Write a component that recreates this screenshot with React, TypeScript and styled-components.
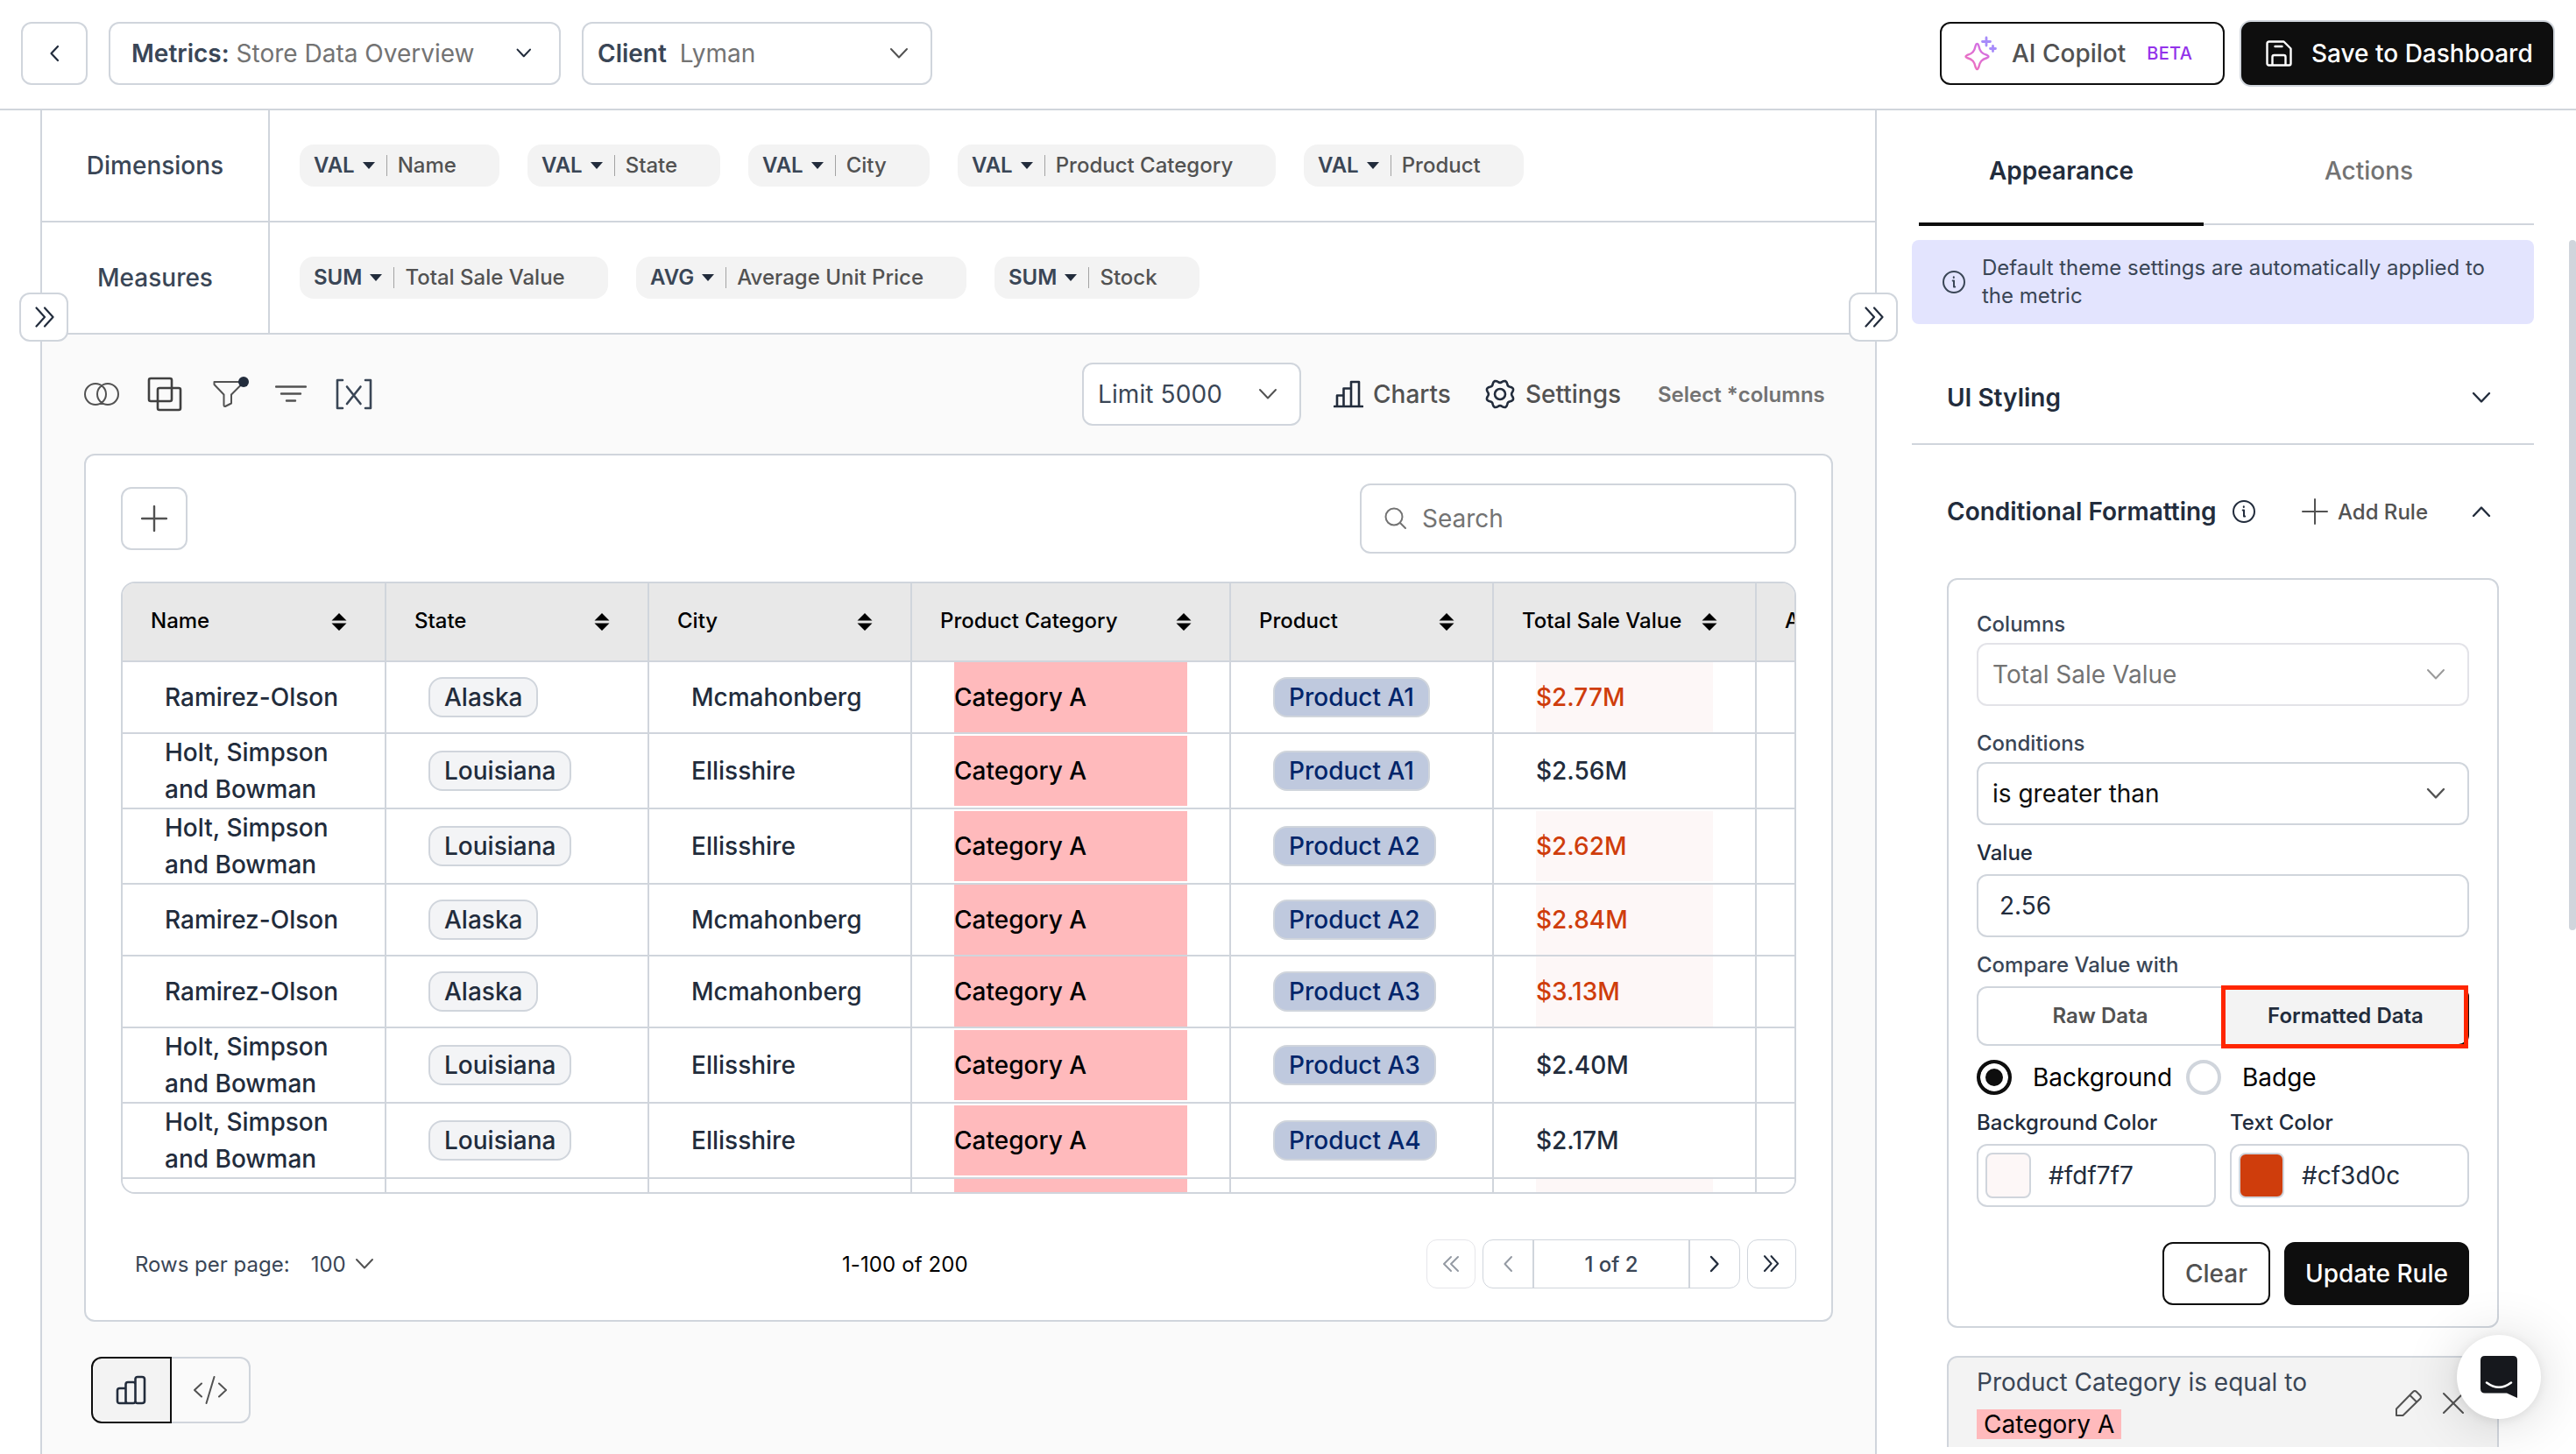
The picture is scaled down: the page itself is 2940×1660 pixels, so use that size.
import { useState } from 'react';
import styled, { createGlobalStyle, css } from 'styled-components';

const line = '#d0d5dc';
const ink = '#222c3c';
const slate = '#3a4656';
const grey = '#737373';
const black = '#0e0e0e';

const GlobalStyle = createGlobalStyle`
  * {
    box-sizing: border-box;
  }

  body {
    margin: 0;
    background: #ffffff;
    font-family: Inter, 'Liberation Sans', sans-serif;
    font-size: 28px;
    color: ${ink};
  }

  button,
  input {
    font: inherit;
    color: inherit;
    margin: 0;
    padding: 0;
  }

  svg {
    display: block;
    flex: none;
  }
`;

/* ---------- icons ---------- */

type IconName =
  | 'left'
  | 'right'
  | 'down'
  | 'up'
  | 'doubleLeft'
  | 'doubleRight'
  | 'plus'
  | 'search'
  | 'info'
  | 'save'
  | 'venn'
  | 'copy'
  | 'funnel'
  | 'lines'
  | 'variable'
  | 'chart'
  | 'gear'
  | 'bars'
  | 'code'
  | 'pencil'
  | 'close';

// eight soft lobes around a 36px box
const gear = () => {
  const points: string[] = [];
  for (let i = 0; i < 96; i += 1) {
    const angle = (i / 96) * Math.PI * 2;
    const radius = 14.6 - 1.5 * Math.cos(8 * angle);
    points.push(`${(18 + radius * Math.cos(angle)).toFixed(2)} ${(18 + radius * Math.sin(angle)).toFixed(2)}`);
  }
  return `M${points.join('L')}Z`;
};

const icons: Record<IconName, { w: number; h: number; d: string }> = {
  left: { w: 12, h: 20, d: 'M10 2L2.500 10L10 18' },
  right: { w: 12, h: 20, d: 'M2 2L9.500 10L2 18' },
  down: { w: 22, h: 14, d: 'M2 2L11 11.500L20 2' },
  up: { w: 22, h: 14, d: 'M2 12L11 2.500L20 12' },
  doubleLeft: { w: 20, h: 20, d: 'M10 2L2 10L10 18M18 2L10 10L18 18' },
  doubleRight: { w: 24, h: 24, d: 'M2.500 1.500L12 12L2.500 22.500M12 1.500L21.500 12L12 22.500' },
  plus: { w: 30, h: 30, d: 'M15 1V29M1 15H29' },
  search: { w: 26, h: 26, d: 'M11 1.500a9.500 9.500 0 1 0 0 19a9.500 9.500 0 1 0 0-19M18 18L24 24' },
  info: { w: 28, h: 28, d: 'M14 2a12 12 0 1 0 0 24a12 12 0 1 0 0-24M12.700 12.500H14V19.500H15.200M13.800 8.300V9' },
  save: {
    w: 30,
    h: 30,
    d: 'M4 1.500H20.500L28.500 9.500V26.500Q28.500 28.500 26.500 28.500H3.500Q1.500 28.500 1.500 26.500V4Q1.500 1.500 4 1.500ZM7.500 28V19Q7.500 17 9.500 17H20.500Q22.500 17 22.500 19V28M10.500 7H18.500',
  },
  venn: { w: 42, h: 28, d: 'M13 2a12 12 0 1 0 0 24a12 12 0 1 0 0-24M27 2a12 12 0 1 0 0 24a12 12 0 1 0 0-24' },
  copy: {
    w: 40,
    h: 40,
    d: 'M4 2H26Q28 2 28 4V26Q28 28 26 28H4Q2 28 2 26V4Q2 2 4 2ZM14 13H36Q38 13 38 15V36Q38 38 36 38H14Q12 38 12 36V15Q12 13 14 13Z',
  },
  funnel: { w: 36, h: 32, d: 'M2 2H33V4.500L21 16.500V26.500L14 30Q12.500 30 12.500 28.500V16.500L1.500 5V2Z' },
  lines: { w: 36, h: 20, d: 'M1 1.500H35M7 9.500H29M13 17.500H23' },
  variable: { w: 42, h: 36, d: 'M8 2H2V34H8M34 2H40V34H34M13 9.500L28.500 29M28.500 9.500L13 29' },
  chart: { w: 34, h: 34, d: 'M1 31H33M4 31V18.500H11.500M11.500 31V10.500H20M20 31V3H29V31' },
  gear: { w: 36, h: 36, d: `${gear()}M18 12a6 6 0 1 0 0 12a6 6 0 1 0 0-12` },
  bars: {
    w: 36,
    h: 34,
    d: 'M2 17.500Q2 15 4.500 15H11.500V32H4.500Q2 32 2 29.500ZM11.500 10.500Q11.500 8 14 8H20Q22.500 8 22.500 10.500V29.500Q22.500 32 20 32H14Q11.500 32 11.500 29.500ZM22.500 4.500Q22.500 2 25 2H30Q33 2 33 4.500V29.500Q33 32 30 32H25Q22.500 32 22.500 29.500Z',
  },
  code: { w: 40, h: 32, d: 'M10 8.500L2 16L10 23.500M30 8.500L38 16L30 23.500M24.500 1L15.500 31' },
  pencil: { w: 32, h: 32, d: 'M2 30V22.500L21 3Q23 1 25 3L29 7Q31 9 29 11L9.500 30ZM17.500 7L25 14.500' },
  close: { w: 26, h: 26, d: 'M2 2L24 24M24 2L2 24' },
};

interface IconProps {
  name: IconName;
  color?: string;
  stroke?: number;
  scale?: number;
}

const Icon = ({ name, color = 'currentColor', stroke = 2, scale = 1 }: IconProps) => {
  const { w, h, d } = icons[name];
  return (
    <svg
      width={w * scale}
      height={h * scale}
      viewBox={`0 0 ${w} ${h}`}
      fill="none"
      stroke={color}
      strokeWidth={stroke}
      strokeLinecap="round"
      strokeLinejoin="round"
    >
      <path d={d} />
    </svg>
  );
};

const SparkleIcon = () => (
  <svg width="38" height="40" viewBox="0 0 38 40" fill="none" strokeLinecap="round" strokeLinejoin="round">
    <defs>
      <linearGradient id="sparkle" x1="0" y1="1" x2="0.7" y2="0">
        <stop offset="0" stopColor="#f472b6" />
        <stop offset="1" stopColor="#d06fe6" />
      </linearGradient>
    </defs>
    <path
      d="M15.500 9Q16.700 9 17.200 11C18.600 17.500 20.500 20 27 22Q30 23.500 27 25C20.500 27 18.600 29.500 17.200 36Q15.500 40 13.800 36C12.400 29.500 10.500 27 4 25Q1 23.500 4 22C10.500 20 12.400 17.500 13.800 11Q14.300 9 15.500 9Z"
      stroke="url(#sparkle)"
      strokeWidth="2.400"
    />
    <path d="M26 2V11M21.500 6.500H30.500M33.500 11.500V17.500M30.500 14.500H36.500" stroke="#a78bfa" strokeWidth="2.800" />
  </svg>
);

const SortIcon = () => (
  <svg width="18" height="20" viewBox="0 0 18 20" fill="#000000">
    <path d="M9 0L17.500 8.500H0.500ZM9 20L17.500 11.500H0.500Z" />
  </svg>
);

const Caret = () => (
  <svg width="14" height="8" viewBox="0 0 14 8" fill={ink}>
    <path d="M0 0H14L7 8Z" />
  </svg>
);

const MessengerIcon = () => (
  <svg width="42" height="48" viewBox="0 0 42 48" fill="none">
    <path d="M5 0H37Q42 0 42 5V48L30 42.500H5Q0 42.500 0 37.500V5Q0 0 5 0Z" fill="#16181d" />
    <path d="M7 30.500Q21 41 35 30.500" stroke="#ffffff" strokeWidth="2.600" strokeLinecap="round" />
  </svg>
);

/* ---------- shell ---------- */

const Page = styled.div`
  position: relative;
  width: 2940px;
  height: 1660px;
  overflow: hidden;
  background: #ffffff;
`;

const Header = styled.header`
  display: flex;
  align-items: center;
  height: 126px;
  padding: 0 24px 2px;
  border-bottom: 2px solid ${line};
`;

const outlined = css`
  display: flex;
  align-items: center;
  height: 72px;
  background: #ffffff;
  border: 2px solid ${line};
  border-radius: 12px;
`;

const BackButton = styled.button`
  ${outlined}
  justify-content: center;
  width: 76px;
  margin-right: 24px;
`;

const HeaderSelect = styled.div<{ $width: number; $left: number; $right: number; $gap: number }>`
  ${outlined}
  width: ${({ $width }) => $width}px;
  margin-right: 24px;
  padding: 0 ${({ $right }) => $right}px 0 ${({ $left }) => $left}px;
  gap: ${({ $gap }) => $gap}px;
  color: ${grey};

  b {
    font-weight: 600;
    color: ${slate};
  }

  svg {
    margin-left: auto;
  }
`;

const CopilotButton = styled.button`
  ${outlined}
  width: 325px;
  margin-left: auto;
  padding-left: 25px;
  border-color: ${black};
  font-weight: 500;
  color: #525252;

  span {
    margin-left: 17px;
  }

  small {
    margin-left: 24px;
    font-size: 20px;
    font-weight: 500;
    letter-spacing: 0.3px;
    color: #9333ea;
  }
`;

const SaveButton = styled.button`
  display: flex;
  align-items: center;
  gap: 22px;
  width: 360px;
  height: 76px;
  margin: 0 0 0 17px;
  padding-left: 28px;
  border: 2px solid ${line};
  border-radius: 13px;
  background: ${black};
  color: #ffffff;
  font-weight: 500;
`;

const Body = styled.div`
  display: flex;
  height: 1534px;
  padding-left: 46px;
`;

const Main = styled.main`
  position: relative;
  width: 2096px;
  flex: none;
  display: flex;
  flex-direction: column;
  border: solid ${line};
  border-width: 0 2px;
`;

const FieldRow = styled.div`
  display: flex;
  height: 128px;
  flex: none;
  border-bottom: 2px solid ${line};
`;

const FieldLabel = styled.div`
  display: flex;
  align-items: center;
  justify-content: center;
  width: 260px;
  border-right: 2px solid ${line};
  font-weight: 500;
  color: ${slate};
`;

const Chips = styled.div`
  display: flex;
  align-items: center;
  gap: 32px;
  padding-left: 34px;
`;

const Chip = styled.div<{ $width: number }>`
  display: flex;
  align-items: center;
  width: ${({ $width }) => $width}px;
  height: 48px;
  padding: 0 0 1px 16px;
  border-radius: 16px;
  background: #f3f3f3;
  font-size: 24px;
  font-weight: 500;
  color: #525252;
  white-space: nowrap;

  b {
    font-weight: 600;
    color: ${slate};
    margin-right: 9px;
  }

  i {
    width: 1px;
    height: 24px;
    margin: 0 12px 0 13px;
    background: #a3a3a3;
  }
`;

const CollapseButton = styled.button<{ $x: number }>`
  position: absolute;
  top: 208px;
  left: ${({ $x }) => $x}px;
  display: flex;
  align-items: center;
  justify-content: center;
  width: 56px;
  height: 56px;
  padding-left: 2px;
  border: 2px solid ${line};
  border-radius: 12px;
  background: #ffffff;
`;

/* ---------- workspace ---------- */

const Workspace = styled.section`
  flex: 1;
  padding: 32px 48px 0;
  background: #fafafa;
`;

const Toolbar = styled.div`
  display: flex;
  align-items: center;
  justify-content: space-between;
  height: 72px;
  margin-bottom: 32px;
`;

const ToolIcons = styled.div`
  display: flex;
  align-items: center;
  color: #525252;
`;

const ToolIcon = styled.span<{ $width: number }>`
  position: relative;
  width: ${({ $width }) => $width}px;
`;

const Dot = styled.span`
  position: absolute;
  top: -4px;
  left: 29px;
  width: 12px;
  height: 12px;
  border-radius: 50%;
  background: ${ink};
`;

const ToolActions = styled.div`
  display: flex;
  align-items: center;
`;

const LimitSelect = styled.div`
  ${outlined}
  justify-content: space-between;
  width: 250px;
  margin-right: 37px;
  padding: 0 25px 0 16px;
  letter-spacing: 0.1px;
  color: ${slate};
`;

const ToolButton = styled.button<{ $width: number }>`
  display: flex;
  align-items: center;
  gap: 11px;
  width: ${({ $width }) => $width}px;
  border: 0;
  background: none;
  font-weight: 500;
  color: #525252;

  svg {
    color: ${ink};
  }
`;

const SelectColumns = styled.button`
  width: 200px;
  border: 0;
  background: none;
  font-size: 24px;
  font-weight: 600;
  text-align: left;
  white-space: nowrap;
  color: ${grey};
`;

const Card = styled.div`
  height: 991px;
  padding: 32px 40px;
  border: 2px solid ${line};
  border-radius: 12px;
  background: #ffffff;
`;

const CardTop = styled.div`
  display: flex;
  align-items: center;
  justify-content: space-between;
  height: 80px;
  margin-bottom: 32px;
`;

const AddButton = styled.button`
  ${outlined}
  justify-content: center;
  width: 76px;
  color: #525252;
`;

const SearchBox = styled.label`
  ${outlined}
  gap: 17px;
  width: 498px;
  height: 80px;
  padding-left: 26px;
  color: ${grey};

  input {
    width: 380px;
    border: 0;
    outline: 0;
    background: none;
  }

  input::placeholder {
    color: ${grey};
    opacity: 1;
  }
`;

/* ---------- table ---------- */

const Table = styled.div`
  height: 699px;
  overflow: hidden;
  border: 2px solid ${line};
  border-radius: 16px;
`;

const Row = styled.div<{ $height: number; $head?: boolean }>`
  display: grid;
  grid-template-columns: 301px 300px 300px 364px 300px 300px 300px;
  width: 2165px;
  height: ${({ $height }) => $height}px;
  border-bottom: 2px solid ${line};
  background: ${({ $head }) => ($head ? '#e8e8e8' : '#ffffff')};
`;

const HeadCell = styled.div`
  display: flex;
  align-items: center;
  justify-content: space-between;
  padding: 0 43px 0 32px;
  border-right: 2px solid ${line};
  font-size: 24px;
  font-weight: 500;
  line-height: 30px;
  color: #000000;
  white-space: nowrap;

  span {
    padding-bottom: 2px;
  }
`;

const Cell = styled.div`
  display: flex;
  align-items: center;
  min-width: 0;
  padding: 0 48px;
  border-right: 2px solid ${line};
  font-weight: 500;
  line-height: 42px;
`;

const Fill = styled.div<{ $bg?: string; $color?: string }>`
  display: flex;
  align-items: center;
  width: 100%;
  height: 80px;
  background: ${({ $bg }) => $bg ?? 'transparent'};
  color: ${({ $color }) => $color ?? ink};
`;

const Badge = styled.span<{ $blue?: boolean }>`
  height: 46px;
  padding: 0 16px;
  border: 2px solid ${line};
  border-radius: 16px;
  background: ${({ $blue }) => ($blue ? '#bfc9de' : '#f3f4f6')};
  color: ${({ $blue }) => ($blue ? '#02256a' : ink)};
  white-space: nowrap;
`;

const CardFooter = styled.div`
  display: flex;
  align-items: center;
  height: 56px;
  margin-top: 52px;
  font-size: 24px;
  color: ${slate};
`;

const PageSize = styled.div`
  display: flex;
  align-items: center;
  width: 823px;
  padding-left: 16px;

  span {
    margin: 0 10px 0 24px;
  }
`;

const RangeText = styled.div`
  letter-spacing: 0.1px;
  color: #000000;
`;

const Pager = styled.div`
  display: flex;
  gap: 8px;
  margin-left: auto;
`;

const PagerButton = styled.button<{ $muted?: boolean }>`
  display: flex;
  align-items: center;
  justify-content: center;
  width: 56px;
  height: 56px;
  border: 1px solid ${({ $muted }) => ($muted ? '#e6e6ea' : line)};
  border-radius: 12px;
  background: #ffffff;
  color: ${({ $muted }) => ($muted ? '#949aa3' : ink)};
`;

const PagerGroup = styled.div`
  display: grid;
  grid-template-columns: 56px 1fr 56px;
  width: 294px;
  height: 56px;
  border: 1px solid ${line};
  border-radius: 12px;
`;

const PagerStep = styled.button<{ $muted?: boolean }>`
  display: flex;
  align-items: center;
  justify-content: center;
  border: 0;
  background: none;
  color: ${({ $muted }) => ($muted ? '#949aa3' : ink)};
`;

const PageNumber = styled.span`
  display: flex;
  align-items: center;
  justify-content: center;
  border: solid ${line};
  border-width: 0 2px;
  font-weight: 500;
`;

const ViewSwitch = styled.div`
  display: flex;
  width: 182px;
  margin: 40px 0 0 8px;
`;

const ViewButton = styled.button<{ $active: boolean }>`
  display: flex;
  align-items: center;
  justify-content: center;
  width: 92px;
  height: 76px;
  border: 2px solid ${line};
  background: transparent;
  color: #525252;

  &:first-child {
    border-radius: 12px 0 0 12px;
  }

  &:last-child {
    width: 90px;
    border-left: 0;
    border-radius: 0 12px 12px 0;
  }

  ${({ $active }) =>
    $active &&
    css`
      border-color: ${black};
      background: #f3f3f3;
      color: ${ink};
    `}
`;

/* ---------- settings panel ---------- */

const Panel = styled.aside`
  position: relative;
  flex: 1;
  padding: 0 48px 0 40px;
`;

const Tabs = styled.div`
  display: flex;
  align-items: flex-end;
  height: 132px;
  margin: 0 0 16px 8px;
`;

const Tab = styled.button<{ $active: boolean }>`
  width: ${({ $active }) => ($active ? 325 : 377)}px;
  height: ${({ $active }) => ($active ? 132 : 131)}px;
  padding-top: 9px;
  border: 0;
  border-bottom: ${({ $active }) => ($active ? `4px solid ${black}` : `2px solid ${line}`)};
  margin-bottom: ${({ $active }) => ($active ? 0 : 1)}px;
  background: none;
  font-weight: ${({ $active }) => ($active ? 600 : 500)};
  color: ${({ $active }) => ($active ? ink : grey)};
`;

const PanelScroll = styled.div`
  height: 1378px;
  overflow: hidden;
`;

const ScrollThumb = styled.div`
  position: absolute;
  top: 148px;
  right: 0;
  width: 8px;
  height: 788px;
  border-radius: 4px;
  background: #d0d5dc;
`;

const Notice = styled.div`
  display: flex;
  align-items: center;
  gap: 18px;
  height: 96px;
  padding: 0 36px 0 34px;
  border-radius: 8px;
  background: #e3e4fe;
  font-size: 24px;
  line-height: 32px;
  color: ${slate};
`;

const SectionHead = styled.div<{ $height: number; $top?: number; $line?: boolean }>`
  display: flex;
  align-items: center;
  height: ${({ $height }) => $height}px;
  padding: ${({ $top = 0 }) => $top}px 49px 0 40px;
  border-bottom: ${({ $line }) => ($line ? `2px solid ${line}` : '0')};
  white-space: nowrap;
`;

const SectionTitle = styled.h3<{ $width?: number }>`
  display: flex;
  align-items: center;
  gap: 17px;
  width: ${({ $width }) => ($width ? `${$width}px` : 'auto')};
  margin: 0 auto 0 0;
  font-size: 28px;
  font-weight: 600;
`;

const AddRule = styled.button`
  display: flex;
  align-items: center;
  gap: 11px;
  border: 0;
  margin-right: 50px;
  background: none;
  font-size: 24px;
  font-weight: 500;
  color: #525252;
`;

const RuleForm = styled.div`
  width: 630px;
  height: 856px;
  margin-left: 40px;
  padding: 35px 32px 0;
  border: 2px solid ${line};
  border-radius: 12px;
`;

const Label = styled.div<{ $dark?: boolean; $top?: number; $bottom?: number }>`
  margin: ${({ $top = 0, $bottom = 5 }) => `${$top}px 0 ${$bottom}px`};
  font-size: 24px;
  line-height: 32px;
  font-weight: 500;
  color: ${({ $dark }) => ($dark ? ink : slate)};
`;

const Select = styled.div<{ $disabled?: boolean }>`
  ${outlined}
  justify-content: space-between;
  padding: 0 25px 0 16px;
  border-color: ${({ $disabled }) => ($disabled ? '#e3e3e8' : line)};
  color: ${({ $disabled }) => ($disabled ? grey : '#0e0e0e')};

  svg {
    color: ${({ $disabled }) => ($disabled ? '#9a9a9a' : '#525252')};
  }
`;

const ValueInput = styled.input`
  ${outlined}
  width: 100%;
  padding-left: 24px;
`;

const Segment = styled.div`
  display: flex;
  height: 68px;
`;

const SegmentButton = styled.button<{ $active: boolean }>`
  width: 50%;
  padding: 0 1px 1px 0;
  border: 2px solid ${line};
  border-right: 0;
  border-radius: 12px 0 0 12px;
  background: #ffffff;
  font-size: 24px;
  font-weight: 600;
  color: #525252;

  ${({ $active }) =>
    $active &&
    css`
      position: relative;
      border: 2px solid ${black};
      border-radius: 0 12px 12px 0;
      background: #f3f3f3;
      color: ${ink};

      &::after {
        content: '';
        position: absolute;
        inset: -3px -1px -5px -4px;
        border: 5px solid #ff2600;
      }
    `}
`;

const RadioGroup = styled.div`
  display: flex;
  align-items: center;
  height: 40px;
  margin: 16px 0 16px;
  color: #000000;
`;

const Radio = styled.label<{ $width: number }>`
  display: flex;
  align-items: center;
  gap: 24px;
  width: ${({ $width }) => $width}px;
`;

const RadioMark = styled.span<{ $checked: boolean }>`
  width: 40px;
  height: 40px;
  border: 4px solid ${({ $checked }) => ($checked ? black : line)};
  border-radius: 50%;
  background: ${({ $checked }) => ($checked ? black : '#ffffff')};
  box-shadow: ${({ $checked }) => ($checked ? 'inset 0 0 0 6px #ffffff' : 'none')};
`;

const ColorFields = styled.div`
  display: grid;
  grid-template-columns: 1fr 1fr;
  column-gap: 16px;
`;

const ColorInput = styled.div`
  ${outlined}
  gap: 20px;
  padding-left: 8px;
`;

const Swatch = styled.span<{ $color: string }>`
  width: 52px;
  height: 52px;
  border: 2px solid ${line};
  border-radius: 8px;
  background: ${({ $color }) => $color};
`;

const FormActions = styled.div`
  display: flex;
  justify-content: flex-end;
  gap: 16px;
  margin-top: 40px;
`;

const FormButton = styled.button<{ $solid?: boolean }>`
  ${outlined}
  justify-content: center;
  width: ${({ $solid }) => ($solid ? 211 : 123)}px;
  border-color: ${black};
  background: ${({ $solid }) => ($solid ? black : '#ffffff')};
  color: ${({ $solid }) => ($solid ? '#ffffff' : '#525252')};
  font-weight: 500;
`;

const SavedRule = styled.div`
  display: flex;
  justify-content: space-between;
  width: 630px;
  height: 150px;
  margin: 32px 0 0 40px;
  padding: 7px 37px 0 32px;
  border: 2px solid ${line};
  border-radius: 12px;
  background: #f3f3f3;
  line-height: 42px;
  color: ${slate};
`;

const RuleMatch = styled.span`
  display: table;
  margin-top: 10px;
  padding: 0 8px;
  background: #ffbabc;
  line-height: 34px;
  color: #000000;
`;

const RuleActions = styled.div`
  display: flex;
  align-items: center;
  gap: 22px;
  height: 90px;
  color: #525252;
`;

const Messenger = styled.button`
  position: absolute;
  left: 2804px;
  top: 1524px;
  display: flex;
  align-items: center;
  justify-content: center;
  width: 96px;
  height: 96px;
  border: 0;
  border-radius: 50%;
  background: #ffffff;
  box-shadow: 0 2px 12px rgba(0, 0, 0, 0.08), 0 4px 64px rgba(0, 0, 0, 0.16);
`;

/* ---------- data ---------- */

interface Field {
  fn: string;
  name: string;
  width: number;
}

const dimensions: Field[] = [
  { fn: 'VAL', name: 'Name', width: 228 },
  { fn: 'VAL', name: 'State', width: 220 },
  { fn: 'VAL', name: 'City', width: 207 },
  { fn: 'VAL', name: 'Product Category', width: 363 },
  { fn: 'VAL', name: 'Product', width: 251 },
];

const measures: Field[] = [
  { fn: 'SUM', name: 'Total Sale Value', width: 352 },
  { fn: 'AVG', name: 'Average Unit Price', width: 377 },
  { fn: 'SUM', name: 'Stock', width: 234 },
];

const columns = ['Name', 'State', 'City', 'Product Category', 'Product', 'Total Sale Value', 'Average Unit Price'];

const ramirez = { name: 'Ramirez-Olson', state: 'Alaska', city: 'Mcmahonberg' };
const holt = { name: 'Holt, Simpson and Bowman', state: 'Louisiana', city: 'Ellisshire' };

const sales = [
  { ...ramirez, product: 'Product A1', total: 2.77 },
  { ...holt, product: 'Product A1', total: 2.56 },
  { ...holt, product: 'Product A2', total: 2.62 },
  { ...ramirez, product: 'Product A2', total: 2.84 },
  { ...ramirez, product: 'Product A3', total: 3.13 },
  { ...holt, product: 'Product A3', total: 2.4 },
  { ...holt, product: 'Product A4', total: 2.17 },
];

const FieldChips = ({ label, fields }: { label: string; fields: Field[] }) => (
  <FieldRow>
    <FieldLabel>{label}</FieldLabel>
    <Chips>
      {fields.map(({ fn, name, width }) => (
        <Chip key={name} $width={width}>
          <b>{fn}</b>
          <Caret />
          <i />
          {name}
        </Chip>
      ))}
    </Chips>
  </FieldRow>
);

const SalesTable = ({ threshold }: { threshold: number }) => (
  <Table>
    <Row $height={90} $head>
      {columns.map((column) => (
        <HeadCell key={column}>
          <span>{column}</span>
          <SortIcon />
        </HeadCell>
      ))}
    </Row>
    {sales.map((sale, index) => {
      const hit = sale.total > threshold;
      return (
        <Row key={index} $height={sale.name.length > 14 ? 86 : 82}>
          <Cell>{sale.name}</Cell>
          <Cell>
            <Badge>{sale.state}</Badge>
          </Cell>
          <Cell>{sale.city}</Cell>
          <Cell>
            <Fill $bg="#ffbabc" $color="#000000">
              Category A
            </Fill>
          </Cell>
          <Cell>
            <Badge $blue>{sale.product}</Badge>
          </Cell>
          <Cell>
            <Fill $bg={hit ? '#fdf7f7' : undefined} $color={hit ? '#cf3d0c' : undefined}>
              ${sale.total.toFixed(2)}M
            </Fill>
          </Cell>
          <Cell />
        </Row>
      );
    })}
    <Row $height={82}>
      <Cell />
      <Cell />
      <Cell />
      <Cell>
        <Fill $bg="#ffbabc" />
      </Cell>
      <Cell />
      <Cell>
        <Fill $bg="#fdf7f7" />
      </Cell>
      <Cell />
    </Row>
  </Table>
);

export default function App() {
  const [tab, setTab] = useState('Appearance');
  const [view, setView] = useState('chart');
  const [value, setValue] = useState('2.56');
  const [compare, setCompare] = useState('Formatted Data');
  const [target, setTarget] = useState('Background');

  return (
    <Page>
      <GlobalStyle />
      <Header>
        <BackButton>
          <Icon name="left" stroke={2.2} />
        </BackButton>
        <HeaderSelect $width={516} $left={24} $right={31} $gap={8}>
          <b>Metrics:</b> Store Data Overview
          <Icon name="down" color={ink} scale={0.8} stroke={2.6} />
        </HeaderSelect>
        <HeaderSelect $width={400} $left={16} $right={25} $gap={15}>
          <b>Client</b> Lyman
          <Icon name="down" color="#525252" />
        </HeaderSelect>
        <CopilotButton>
          <SparkleIcon />
          <span>AI Copilot</span>
          <small>BETA</small>
        </CopilotButton>
        <SaveButton>
          <Icon name="save" stroke={2.4} />
          Save to Dashboard
        </SaveButton>
      </Header>

      <Body>
        <Main>
          <FieldChips label="Dimensions" fields={dimensions} />
          <FieldChips label="Measures" fields={measures} />
          <Workspace>
            <Toolbar>
              <ToolIcons>
                <ToolIcon $width={72}>
                  <Icon name="venn" />
                </ToolIcon>
                <ToolIcon $width={75}>
                  <Icon name="copy" stroke={2.6} color="#404040" />
                </ToolIcon>
                <ToolIcon $width={71}>
                  <Icon name="funnel" />
                  <Dot />
                </ToolIcon>
                <ToolIcon $width={69}>
                  <Icon name="lines" stroke={2.4} />
                </ToolIcon>
                <ToolIcon $width={42}>
                  <Icon name="variable" color={slate} stroke={2.6} />
                </ToolIcon>
              </ToolIcons>
              <ToolActions>
                <LimitSelect>
                  Limit 5000
                  <Icon name="down" color="#525252" />
                </LimitSelect>
                <ToolButton $width={172}>
                  <Icon name="chart" stroke={2.6} />
                  Charts
                </ToolButton>
                <ToolButton $width={198}>
                  <Icon name="gear" stroke={2.6} />
                  Settings
                </ToolButton>
                <SelectColumns>Select *columns</SelectColumns>
              </ToolActions>
            </Toolbar>

            <Card>
              <CardTop>
                <AddButton>
                  <Icon name="plus" stroke={2.4} />
                </AddButton>
                <SearchBox>
                  <Icon name="search" />
                  <input placeholder="Search" />
                </SearchBox>
              </CardTop>
              <SalesTable threshold={Number(value)} />
              <CardFooter>
                <PageSize>
                  Rows per page: <span>100</span>
                  <Icon name="down" color="#525252" />
                </PageSize>
                <RangeText>1-100 of 200</RangeText>
                <Pager>
                  <PagerButton $muted>
                    <Icon name="doubleLeft" />
                  </PagerButton>
                  <PagerGroup>
                    <PagerStep $muted>
                      <Icon name="left" />
                    </PagerStep>
                    <PageNumber>1 of 2</PageNumber>
                    <PagerStep>
                      <Icon name="right" stroke={2.4} />
                    </PagerStep>
                  </PagerGroup>
                  <PagerButton>
                    <Icon name="doubleRight" scale={0.8} stroke={2.6} />
                  </PagerButton>
                </Pager>
              </CardFooter>
            </Card>

            <ViewSwitch>
              <ViewButton $active={view === 'chart'} onClick={() => setView('chart')}>
                <Icon name="bars" stroke={2.6} />
              </ViewButton>
              <ViewButton $active={view === 'code'} onClick={() => setView('code')}>
                <Icon name="code" />
              </ViewButton>
            </ViewSwitch>
          </Workspace>
          <CollapseButton $x={-26}>
            <Icon name="doubleRight" stroke={2.2} />
          </CollapseButton>
          <CollapseButton $x={2062}>
            <Icon name="doubleRight" stroke={2.2} />
          </CollapseButton>
        </Main>

        <Panel>
          <Tabs>
            {['Appearance', 'Actions'].map((name) => (
              <Tab key={name} $active={tab === name} onClick={() => setTab(name)}>
                {name}
              </Tab>
            ))}
          </Tabs>
          <PanelScroll>
            <Notice>
              <Icon name="info" />
              Default theme settings are automatically applied to the metric
            </Notice>
            <SectionHead $height={138} $top={32} $line>
              <SectionTitle>UI Styling</SectionTitle>
              <Icon name="down" stroke={2.4} />
            </SectionHead>
            <SectionHead $height={152}>
              <SectionTitle $width={390}>
                Conditional Formatting
                <Icon name="info" />
              </SectionTitle>
              <AddRule>
                <Icon name="plus" />
                Add Rule
              </AddRule>
              <Icon name="up" stroke={2.4} />
            </SectionHead>
            <RuleForm>
              <Label>Columns</Label>
              <Select $disabled>
                Total Sale Value
                <Icon name="down" />
              </Select>
              <Label $top={27}>Conditions</Label>
              <Select>
                is greater than
                <Icon name="down" stroke={2.4} />
              </Select>
              <Label $dark $top={16} $bottom={8}>
                Value
              </Label>
              <ValueInput value={value} onChange={(e) => setValue(e.target.value)} />
              <Label $top={16} $bottom={8}>
                Compare Value with
              </Label>
              <Segment>
                {['Raw Data', 'Formatted Data'].map((name) => (
                  <SegmentButton key={name} $active={compare === name} onClick={() => setCompare(name)}>
                    {name}
                  </SegmentButton>
                ))}
              </Segment>
              <RadioGroup>
                <Radio $width={239} onClick={() => setTarget('Background')}>
                  <RadioMark $checked={target === 'Background'} />
                  Background
                </Radio>
                <Radio $width={160} onClick={() => setTarget('Badge')}>
                  <RadioMark $checked={target === 'Badge'} />
                  Badge
                </Radio>
              </RadioGroup>
              <ColorFields>
                <div>
                  <Label $dark $bottom={8}>
                    Background Color
                  </Label>
                  <ColorInput>
                    <Swatch $color="#fdf7f7" />
                    #fdf7f7
                  </ColorInput>
                </div>
                <div>
                  <Label $dark $bottom={8}>
                    Text Color
                  </Label>
                  <ColorInput>
                    <Swatch $color="#cf3d0c" />
                    #cf3d0c
                  </ColorInput>
                </div>
              </ColorFields>
              <FormActions>
                <FormButton>Clear</FormButton>
                <FormButton $solid>Update Rule</FormButton>
              </FormActions>
            </RuleForm>
            <SavedRule>
              <div>
                Product Category is equal to
                <RuleMatch>Category A</RuleMatch>
              </div>
              <RuleActions>
                <Icon name="pencil" />
                <Icon name="close" />
              </RuleActions>
            </SavedRule>
          </PanelScroll>
          <ScrollThumb />
        </Panel>
      </Body>

      <Messenger>
        <MessengerIcon />
      </Messenger>
    </Page>
  );
}
